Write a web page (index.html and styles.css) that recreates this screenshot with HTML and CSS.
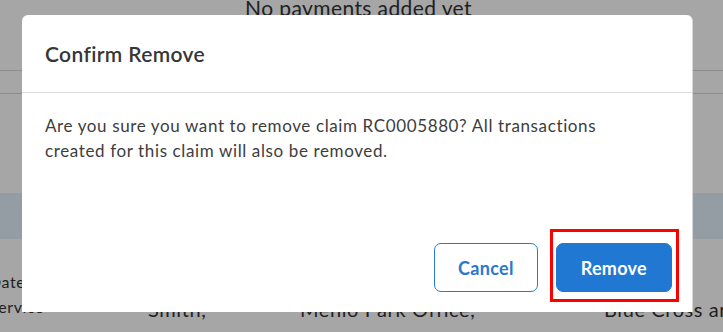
FILE: index.html
```html
<!DOCTYPE html>
<html>
<head>
  <link rel="stylesheet" href="styles.css">
</head>
<body>
  <div class="page">
    <div class="empty"><span class="empty-text">No payments added yet</span></div>
    <div class="sub-row"></div>
    <div class="spacer"></div>
    <div class="band"></div>
    <div class="claim-row">
      <div class="cell cell-small">Date<br>Service</div>
      <div class="cell">Smith,</div>
      <div class="cell">Menlo Park Office,</div>
      <div class="cell">Blue Cross and</div>
    </div>
  </div>

  <div class="overlay"></div>

  <div class="modal">
    <div class="modal-header">Confirm Remove</div>
    <div class="modal-body">
      Are you sure you want to remove claim RC0005880? All transactions created for this claim will also be removed.
    </div>
    <div class="modal-footer">
      <button class="btn btn-cancel">Cancel</button>
      <button class="btn btn-remove">Remove</button>
    </div>
  </div>
</body>
</html>
```

FILE: styles.css
```css
body {
  margin: 0;
  width: 723px;
  height: 332px;
  overflow: hidden;
  background-color: #ffffff;
  font-family: Lato, "Open Sans", sans-serif;
  color: #333333;
}

/* page behind the dialog */
.page {
  width: 723px;
}

.empty {
  height: 74px;
  border-bottom: 1px solid #d8d8d8;
  text-align: center;
}

.empty-text {
  display: block;
  margin-top: -4px;
  margin-left: -6px;
  font-size: 21px;
  line-height: 24px;
  letter-spacing: 0.4px;
}

.sub-row {
  height: 22px;
  border-bottom: 1px solid #d8d8d8;
}

.spacer {
  height: 99px;
}

.band {
  height: 46px;
  background-color: #e2f2fb;
}

.claim-row {
  display: grid;
  grid-template-columns: 159px 152px 304px 200px;
  margin-left: -11px;
}

.cell {
  padding-top: 58px;
  font-size: 20px;
  line-height: 25px;
  letter-spacing: 0.6px;
  white-space: nowrap;
}

.cell-small {
  padding-top: 30px;
  font-size: 16px;
}

.overlay {
  position: fixed;
  top: 0;
  left: 0;
  right: 0;
  bottom: 0;
  background-color: rgba(0, 0, 0, 0.35);
}

/* dialog */
.modal {
  position: absolute;
  top: 15px;
  left: 22px;
  width: 670px;
  height: 297px;
  display: flex;
  flex-direction: column;
  background-color: #ffffff;
  border-right: 1px solid #d6d6d6;
  border-radius: 6px 6px 0 0;
}

.modal-header {
  height: 77px;
  display: flex;
  align-items: center;
  padding: 0 23px;
  border-bottom: 1px solid #dddddd;
  font-size: 21px;
  font-weight: 600;
  letter-spacing: 0.35px;
  color: #363636;
}

.modal-body {
  flex: 1;
  padding: 20px 60px 0 23px;
  font-size: 17px;
  line-height: 25px;
  letter-spacing: 0.62px;
  color: #3d3d3d;
}

.modal-footer {
  display: flex;
  justify-content: flex-end;
  gap: 18px;
  padding: 0 20px 20px;
}

.btn {
  height: 49px;
  padding: 0 24px;
  border-radius: 7px;
  font-family: Lato, "Open Sans", sans-serif;
  font-size: 18px;
  font-weight: 700;
  letter-spacing: 0.3px;
  cursor: pointer;
}

.btn-cancel {
  padding: 0 23px;
  background-color: #ffffff;
  border: 1px solid #2a7bd0;
  color: #2a78cc;
}

.btn-remove {
  position: relative;
  background-color: #2178d2;
  border: 1px solid #2178d2;
  color: #ffffff;
}

/* red highlight box */
.btn-remove::after {
  content: "";
  position: absolute;
  top: -15px;
  left: -7px;
  right: -8px;
  bottom: -11px;
  border: 3px solid #ff0000;
}
```
